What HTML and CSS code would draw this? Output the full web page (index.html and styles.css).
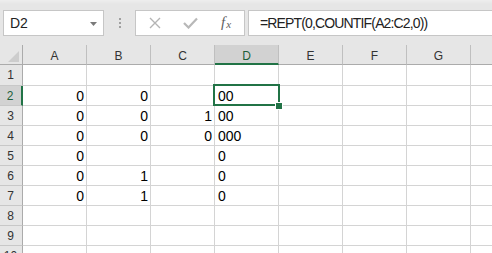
FILE: index.html
```
<!DOCTYPE html>
<html>
<head>
<meta charset="utf-8">
<link rel="stylesheet" href="styles.css">
</head>
<body>
<div class="app">
  <div class="fbar">
    <div class="namebox">
      <span class="name">D2</span>
      <svg class="caret" width="7" height="4" viewBox="0 0 7 4"><polygon points="0,0 7,0 3.5,4" fill="#7a7a7a"/></svg>
    </div>
    <div class="grip"><i></i><i></i><i></i></div>
    <div class="btns">
      <svg class="ico" width="12" height="12" viewBox="0 0 12 12"><path d="M1 1 L11 11 M11 1 L1 11" stroke="#b4b4b4" stroke-width="1.4" fill="none"/></svg>
      <svg class="ico" width="15" height="12" viewBox="0 0 15 12"><path d="M1 6 L5.5 10.5 L14 1.5" stroke="#b8b8b8" stroke-width="2.2" fill="none"/></svg>
      <span class="fx">f<sub>x</sub></span>
    </div>
    <div class="formula">=REPT(0,COUNTIF(A2:C2,0))</div>
  </div>
  <div class="sheet">
    <div class="corner"><svg width="23" height="20" viewBox="0 0 23 20"><polygon points="19,6 19,17 8,17" fill="#cdcdcd"/></svg></div>
    <div class="ch">A</div><div class="ch">B</div><div class="ch">C</div><div class="ch sel">D</div><div class="ch">E</div><div class="ch">F</div><div class="ch">G</div><div class="ch last"></div>

    <div class="rh r1">1</div><div class="c r1"></div><div class="c r1"></div><div class="c r1"></div><div class="c r1"></div><div class="c r1"></div><div class="c r1"></div><div class="c r1"></div><div class="c r1 last"></div>

    <div class="rh sel">2</div><div class="c n">0</div><div class="c n">0</div><div class="c n"></div><div class="c t active">00<span class="box"></span><span class="handle"></span></div><div class="c"></div><div class="c"></div><div class="c"></div><div class="c last"></div>

    <div class="rh">3</div><div class="c n">0</div><div class="c n">0</div><div class="c n">1</div><div class="c t">00</div><div class="c"></div><div class="c"></div><div class="c"></div><div class="c last"></div>

    <div class="rh">4</div><div class="c n">0</div><div class="c n">0</div><div class="c n">0</div><div class="c t">000</div><div class="c"></div><div class="c"></div><div class="c"></div><div class="c last"></div>

    <div class="rh">5</div><div class="c n">0</div><div class="c n"></div><div class="c n"></div><div class="c t">0</div><div class="c"></div><div class="c"></div><div class="c"></div><div class="c last"></div>

    <div class="rh">6</div><div class="c n">0</div><div class="c n">1</div><div class="c n"></div><div class="c t">0</div><div class="c"></div><div class="c"></div><div class="c"></div><div class="c last"></div>

    <div class="rh">7</div><div class="c n">0</div><div class="c n">1</div><div class="c n"></div><div class="c t">0</div><div class="c"></div><div class="c"></div><div class="c"></div><div class="c last"></div>

    <div class="rh">8</div><div class="c"></div><div class="c"></div><div class="c"></div><div class="c"></div><div class="c"></div><div class="c"></div><div class="c"></div><div class="c last"></div>

    <div class="rh">9</div><div class="c"></div><div class="c"></div><div class="c"></div><div class="c"></div><div class="c"></div><div class="c"></div><div class="c"></div><div class="c last"></div>

    <div class="rh">10</div><div class="c"></div><div class="c"></div><div class="c"></div><div class="c"></div><div class="c"></div><div class="c"></div><div class="c"></div><div class="c last"></div>
  </div>
</div>
</body>
</html>
```
FILE: styles.css
```
* { box-sizing: border-box; }
html, body { margin: 0; padding: 0; }
body {
  width: 492px;
  height: 253px;
  overflow: hidden;
  background: #e6e6e6;
  font-family: "Liberation Sans", Arial, sans-serif;
}
.app { width: 492px; }

.fbar {
  height: 45px;
  padding-top: 10px;
  display: flex;
  align-items: flex-start;
  background: linear-gradient(#eeeeee 0, #e6e6e6 4px);
}
.namebox {
  margin-left: 3px;
  width: 101px;
  height: 26px;
  background: #fff;
  border: 1px solid #c6c6c6;
  display: flex;
  align-items: center;
  justify-content: space-between;
  padding: 0 6px 0 6px;
}
.name { font-size: 14px; color: #222; }
.caret { margin-top: 1px; }
.grip {
  width: 31px;
  height: 26px;
  display: flex;
  flex-direction: column;
  align-items: center;
  justify-content: center;
  gap: 2px;
}
.grip i {
  display: block;
  width: 2px;
  height: 2px;
  background: #a0a0a0;
}
.btns {
  width: 110px;
  height: 26px;
  background: #fff;
  border: 1px solid #c6c6c6;
  display: flex;
  align-items: center;
  padding-left: 13px;
  gap: 0;
}
.btns .ico:first-child { margin-right: 22px; }
.btns .ico:nth-child(2) { margin-right: 23px; }
.fx {
  font-family: "Liberation Serif", "Times New Roman", serif;
  font-style: italic;
  font-size: 15px;
  color: #606060;
  line-height: 1;
  margin-top: -2px;
}
.fx sub { font-size: 11px; vertical-align: -1px; margin-left: 1px; }
.formula {
  margin-left: 3px;
  flex: 1;
  height: 26px;
  background: #fff;
  border: 1px solid #c6c6c6;
  border-right: none;
  font-size: 14px;
  line-height: 24px;
  padding-left: 11px;
  color: #222;
  white-space: nowrap;
  letter-spacing: -0.85px;
}

.sheet {
  display: grid;
  grid-template-columns: 23px repeat(7, 64px) 1fr;
  grid-template-rows: 20px 21px;
  grid-auto-rows: 20px;
  background: #fff;
}
.corner, .ch {
  background: #e6e6e6;
  border-bottom: 1px solid #ababab;
}
.corner { border-right: 1px solid #ababab; }
.corner svg { display: block; }
.ch {
  border-right: 1px solid #bfbfbf;
  font-size: 12px;
  color: #333;
  text-align: center;
  line-height: 20px;
  padding-top: 1px;
}
.ch.sel {
  background: #d2d2d2;
  border-bottom: 2px solid #217346;
  color: #1d5f3a;
}
.ch.last { border-right: none; }
.rh {
  background: #e6e6e6;
  border-right: 1px solid #ababab;
  border-bottom: 1px solid #c8c8c8;
  font-size: 12px;
  color: #333;
  text-align: center;
  line-height: 20px;
  padding-right: 1px;
}
.rh.sel {
  background: #d2d2d2;
  border-right: 2px solid #217346;
  color: #1d5f3a;
}
.c {
  border-right: 1px solid #d4d4d4;
  border-bottom: 1px solid #d4d4d4;
  font-size: 14px;
  color: #000;
  line-height: 19px;
  padding-top: 1px;
  white-space: nowrap;
}
.c.last { border-right: none; }
.c.n { text-align: right; padding-right: 2px; }
.c.t { padding-left: 3px; }
.c.active { position: relative; }
.box {
  position: absolute;
  left: -2px;
  top: -2px;
  width: 67px;
  height: 22px;
  border: 2px solid #217346;
}
.handle {
  position: absolute;
  left: 61px;
  top: 17px;
  width: 6px;
  height: 6px;
  background: #217346;
  border: 1px solid #fff;
  box-sizing: content-box;
  margin: -1px 0 0 -1px;
}
```
